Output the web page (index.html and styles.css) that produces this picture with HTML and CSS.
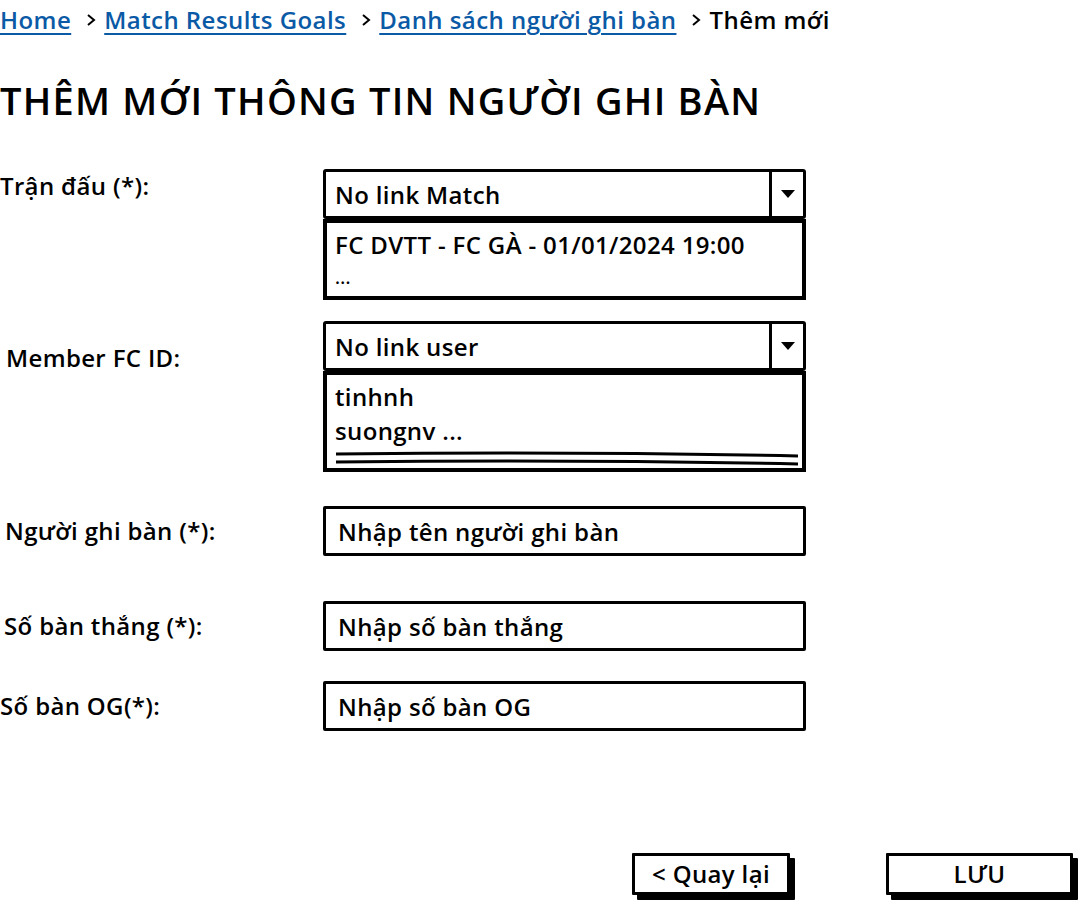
FILE: index.html
```html
<!DOCTYPE html>
<html lang="vi">
<head>
<meta charset="utf-8">
<title>Thêm mới thông tin người ghi bàn</title>
<link rel="stylesheet" href="styles.css">
</head>
<body>
<div class="page">
  <nav class="crumbs">
    <a href="#" class="crumb-link">Home</a>
    <svg class="chev" viewBox="0 0 10 14" width="10" height="14"><polyline points="2,2 8,7 2,12" fill="none" stroke="#000" stroke-width="2"/></svg>
    <a href="#" class="crumb-link">Match Results Goals</a>
    <svg class="chev" viewBox="0 0 10 14" width="10" height="14"><polyline points="2,2 8,7 2,12" fill="none" stroke="#000" stroke-width="2"/></svg>
    <a href="#" class="crumb-link">Danh sách người ghi bàn</a>
    <svg class="chev" viewBox="0 0 10 14" width="10" height="14"><polyline points="2,2 8,7 2,12" fill="none" stroke="#000" stroke-width="2"/></svg>
    <span class="crumb-current">Thêm mới</span>
  </nav>

  <h1 class="title">THÊM MỚI THÔNG TIN NGƯỜI GHI BÀN</h1>

  <form class="form">
    <div class="row row-match">
      <label class="label label-match">Trận đấu (*):</label>
      <div class="combo">
        <div class="select">
          <span class="select-text">No link Match</span>
          <span class="select-btn"><svg viewBox="0 0 16 10" width="16" height="10"><polygon points="1,1 15,1 8,9" fill="#000"/></svg></span>
        </div>
        <div class="list list-match">
          <div class="list-item">FC DVTT - FC GÀ - 01/01/2024 19:00</div>
          <div class="list-item list-more">...</div>
        </div>
      </div>
    </div>

    <div class="row row-member">
      <label class="label label-member">Member FC ID:</label>
      <div class="combo">
        <div class="select">
          <span class="select-text">No link user</span>
          <span class="select-btn"><svg viewBox="0 0 16 10" width="16" height="10"><polygon points="1,1 15,1 8,9" fill="#000"/></svg></span>
        </div>
        <div class="list list-member">
          <div class="list-item">tinhnh</div>
          <div class="list-item">suongnv ...</div>
          <div class="scroll-lines">
            <svg viewBox="0 0 464 16" width="464" height="16" preserveAspectRatio="none">
              <path d="M1,3 Q230,0 463,5" fill="none" stroke="#000" stroke-width="3"/>
              <path d="M1,11 Q230,8 463,13" fill="none" stroke="#000" stroke-width="3"/>
            </svg>
          </div>
        </div>
      </div>
    </div>

    <div class="row row-input row-scorer">
      <label class="label label-scorer">Người ghi bàn (*):</label>
      <div class="input">Nhập tên người ghi bàn</div>
    </div>

    <div class="row row-input row-goals">
      <label class="label label-goals">Số bàn thắng (*):</label>
      <div class="input">Nhập số bàn thắng</div>
    </div>

    <div class="row row-input row-og">
      <label class="label">Số bàn OG(*):</label>
      <div class="input">Nhập số bàn OG</div>
    </div>
  </form>

  <div class="actions">
    <button class="btn btn-back" type="button">&lt; Quay lại</button>
    <button class="btn btn-save" type="button">LƯU</button>
  </div>
</div>
</body>
</html>
```

FILE: styles.css
```css
* { box-sizing: border-box; }

html, body {
  margin: 0;
  padding: 0;
  background: #fff;
}

body {
  font-family: "Open Sans", "Noto Sans", sans-serif;
  color: #000;
  font-size: 24px;
  font-weight: 600;
  letter-spacing: 0.35px;
}

.page {
  width: 1082px;
  height: 904px;
  position: relative;
  overflow: hidden;
}

/* breadcrumb */
.crumbs {
  display: flex;
  align-items: center;
  height: 40px;
  white-space: nowrap;
  line-height: 40px;
  letter-spacing: 0.45px;
}

.crumb-link {
  color: #0b5aa6;
  text-decoration: underline;
  text-underline-offset: 4px;
  text-decoration-thickness: 2px;
}

.chev {
  margin: 0 8px 0 15px;
}

.crumb-current {
  color: #000;
}

/* title */
.title {
  margin: 40px 0 0 0;
  height: 40px;
  line-height: 40px;
  font-size: 38px;
  font-weight: 600;
  letter-spacing: 1.25px;
}

/* form */
.form {
  display: flex;
  flex-direction: column;
  margin-top: 49px;
}

.row {
  display: grid;
  grid-template-columns: 323px 483px;
  align-items: start;
}

.label {
  line-height: 26px;
}

.label-match { padding-top: 4px; }
.label-member { padding-top: 24px; padding-left: 6px; }

.row-member { margin-top: 21px; }
.row-scorer { margin-top: 34px; }
.row-goals { margin-top: 45px; }
.row-og { margin-top: 30px; }

.row-input { align-items: center; }
.label-scorer { padding-left: 5px; }
.label-goals { padding-left: 4px; }

.combo {
  display: flex;
  flex-direction: column;
}

.select {
  height: 50px;
  border: 3px solid #000;
  border-radius: 3px;
  display: flex;
  align-items: stretch;
}

.select-text {
  flex: 1;
  padding-left: 9px;
  display: flex;
  align-items: center;
  line-height: 1;
  padding-top: 1px;
}

.select-btn {
  width: 34px;
  border-left: 3px solid #000;
  display: flex;
  align-items: center;
  justify-content: center;
}

.list {
  border: 4px solid #000;
  padding: 4px 8px 0 8px;
}

.list-match {
  height: 81px;
}

.list-member {
  height: 101px;
}

.list-item {
  line-height: 34px;
  height: 34px;
}

.list-match .list-item:first-child {
  line-height: 36px;
}

.list-member .list-item {
  height: 34px;
  line-height: 36px;
}

.list-more {
  line-height: 32px;
  font-size: 18px;
}

.scroll-lines {
  margin-top: 4px;
  line-height: 0;
}

.input {
  height: 50px;
  border: 3px solid #000;
  border-radius: 2px;
  padding-left: 12px;
  display: flex;
  align-items: center;
}

/* actions */
.actions {
  position: absolute;
  top: 853px;
  left: 632px;
  display: flex;
  gap: 96px;
}

.btn {
  font-family: "Open Sans", "Noto Sans", sans-serif;
  font-size: 24px;
  font-weight: 600;
  letter-spacing: 0.35px;
  color: #000;
  background: #fff;
  border: 3px solid #000;
  border-radius: 1px;
  height: 42px;
  box-shadow: 5px 5px 0 #000;
  padding: 0;
  line-height: 1;
}

.btn-back { width: 158px; }
.btn-save { width: 187px; }
```
